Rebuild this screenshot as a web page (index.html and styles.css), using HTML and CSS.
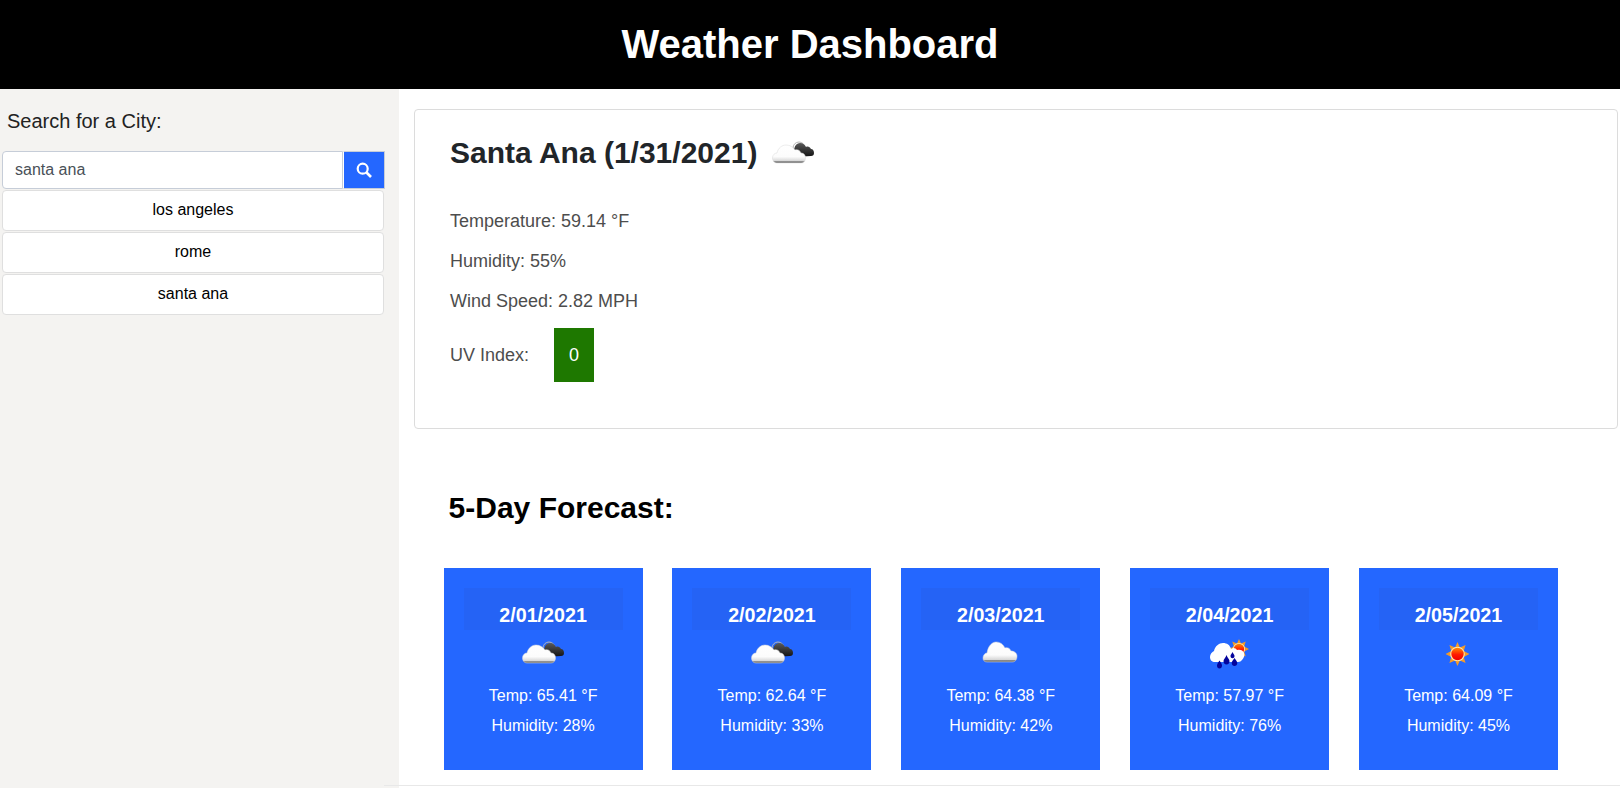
FILE: index.html
```html
<!DOCTYPE html>
<html lang="en">
<head>
  <meta charset="UTF-8">
  <title>Weather Dashboard</title>
  <meta name="viewport" content="width=device-width, initial-scale=1.0">
  <link rel="stylesheet" href="styles.css">
</head>
<body>

  <svg class="defs" width="0" height="0" aria-hidden="true">
    <defs>
      <linearGradient id="white-cloud" x1="0" y1="0" x2="0" y2="1">
        <stop offset="0" stop-color="#ffffff"/>
        <stop offset="0.65" stop-color="#fcfcfc"/>
        <stop offset="0.88" stop-color="#d8d8d8"/>
        <stop offset="0.92" stop-color="#8a8a8a"/>
        <stop offset="1" stop-color="#6f6f6f"/>
      </linearGradient>
      <linearGradient id="dark-cloud" x1="0" y1="0" x2="0" y2="1">
        <stop offset="0" stop-color="#5a5a5a"/>
        <stop offset="1" stop-color="#111111"/>
      </linearGradient>
      <linearGradient id="sun-core" x1="0" y1="0" x2="0" y2="1">
        <stop offset="0" stop-color="#ff8a00"/>
        <stop offset="0.55" stop-color="#ff1a00"/>
        <stop offset="1" stop-color="#f00000"/>
      </linearGradient>
      <symbol id="sun-rays" viewBox="0 0 24 24">
        <path fill="#f39a28" d="M12 0l2.400 5.500 5.700-2.600-1.900 6 5.800 3.100-5.800 3 1.900 6-5.700-2.500L12 24l-2.400-5.500-5.700 2.500 1.900-6L0 12l5.800-3.100-1.900-6 5.700 2.600z"/>
        <circle cx="12" cy="12" r="7.300" fill="#ffe9b0"/>
        <circle cx="12" cy="12" r="6.200" fill="url(#sun-core)"/>
      </symbol>
      <symbol id="icon-clouds" viewBox="0 0 50 50">
        <circle cx="31" cy="18" r="6" fill="none" stroke="#b5b5b5" stroke-width="1"/>
        <path fill="url(#dark-cloud)" d="M26 27c-1-5 0-14 6-14 3 0 5 2 6 4 2-1 4 0 5 2 2 0 3 2 3 4s-1 3-3 3z"/>
        <path fill="url(#white-cloud)" stroke="#d9d9d9" stroke-width="0.500" d="M9 33c-3 0-4.500-2.500-4.500-5 0-3 2-5 4.500-5 1-5 5-8 9-8 4 0 7 2 9 5 2-1 5 0 6 3 3 0 4.500 2 4.500 5 0 3-2 5-4.500 5z"/>
      </symbol>
      <symbol id="icon-cloud" viewBox="0 0 50 50">
        <path fill="url(#white-cloud)" stroke="#d9d9d9" stroke-width="0.500" d="M11 32c-3 0-4-2-4-4 0-3 2-5 4-5 1-7 5-11 9-11 4 0 7 2 9 6 2-1 5 0 6 3 3 0 6 2 6 5 0 4-2 6-5 6z"/>
      </symbol>
      <symbol id="icon-rain" viewBox="0 0 50 50">
        <use href="#sun-rays" x="24" y="9" width="20" height="20"/>
        <path fill="#ffffff" d="M10 32c-3 0-5-2-5-5 0-3 2-5 4-6 1-5 5-8 9-8 4 0 7 2 8 6 2-2 5-1 6 1 3-1 6 0 7 3 1 2 0 5-2 7-1 1-2 2-4 2z"/>
        <g fill="#04049c">
          <path d="M14.500 30.500c1 2 2.500 3 2.500 5s-1 3-2.500 3-2.500-1-2.500-3 1.500-3 2.500-5z"/>
          <path d="M21.500 25c1 3 3 4 3 6s-1 3.500-3 3.500-3-1.500-3-3.500 2-3 3-6z"/>
          <path d="M27.500 22c.8 2 2 2.500 2 4s-1 2.200-2 2.200-2-.7-2-2.200 1.200-2 2-4z"/>
          <path d="M29.500 28c1 2 2.800 3 2.800 5s-1.300 3-2.800 3-2.800-1-2.800-3 1.800-3 2.800-5z"/>
        </g>
      </symbol>
      <symbol id="icon-sun" viewBox="0 0 50 50">
        <use href="#sun-rays" x="12.500" y="12" width="24" height="24"/>
      </symbol>
    </defs>
  </svg>

  <header class="site-header">
    <h1>Weather Dashboard</h1>
  </header>

  <div class="layout">
    <aside class="sidebar">
      <p class="search-label">Search for a City:</p>
      <form class="search-form">
        <input class="search-input" type="text" value="santa ana" aria-label="City">
        <button class="search-btn" type="button" aria-label="Search">
          <svg width="16" height="16" viewBox="0 0 16 16" fill="none" stroke="#fff">
            <circle cx="6.700" cy="6.700" r="5" stroke-width="2.200"/>
            <path d="M10.500 10.500L15 15" stroke-width="2.600"/>
          </svg>
        </button>
      </form>
      <ul class="history">
        <li><button type="button">los angeles</button></li>
        <li><button type="button">rome</button></li>
        <li><button type="button">santa ana</button></li>
      </ul>
    </aside>

    <main class="content">
      <section class="current">
        <h2>Santa Ana (1/31/2021) <svg class="icon-big" width="50" height="50"><use href="#icon-clouds"/></svg></h2>
        <p>Temperature: 59.14 °F</p>
        <p>Humidity: 55%</p>
        <p>Wind Speed: 2.82 MPH</p>
        <div class="uv">
          <span>UV Index:</span>
          <span class="uv-badge">0</span>
        </div>
      </section>

      <section class="forecast">
        <h2>5-Day Forecast:</h2>
        <div class="forecast-row">
          <div class="day">
            <h3>2/01/2021</h3>
            <svg width="50" height="50"><use href="#icon-clouds"/></svg>
            <p>Temp: 65.41 °F</p>
            <p>Humidity: 28%</p>
          </div>
          <div class="day">
            <h3>2/02/2021</h3>
            <svg width="50" height="50"><use href="#icon-clouds"/></svg>
            <p>Temp: 62.64 °F</p>
            <p>Humidity: 33%</p>
          </div>
          <div class="day">
            <h3>2/03/2021</h3>
            <svg width="50" height="50"><use href="#icon-cloud"/></svg>
            <p>Temp: 64.38 °F</p>
            <p>Humidity: 42%</p>
          </div>
          <div class="day">
            <h3>2/04/2021</h3>
            <svg width="50" height="50"><use href="#icon-rain"/></svg>
            <p>Temp: 57.97 °F</p>
            <p>Humidity: 76%</p>
          </div>
          <div class="day">
            <h3>2/05/2021</h3>
            <svg width="50" height="50"><use href="#icon-sun"/></svg>
            <p>Temp: 64.09 °F</p>
            <p>Humidity: 45%</p>
          </div>
        </div>
      </section>
    </main>
  </div>

</body>
</html>
```

FILE: styles.css
```css
* { margin: 0; padding: 0; box-sizing: border-box; }
html, body { height: 788px; overflow: hidden; }
body { font-family: 'Liberation Sans', Arial, sans-serif; background: white; color: #161616; }
.defs { position: absolute; }

.site-header { background: black; color: white; height: 89px; display: flex; align-items: center; justify-content: center; }
.site-header h1 { font-size: 40px; font-weight: 700; }

.layout { display: grid; grid-template-columns: 399px 1fr; height: 699px; }

.sidebar { background: #f4f3f1; padding-top: 20px; }
.search-label { font-size: 20px; line-height: 24px; margin-left: 7px; margin-bottom: 18px; color: #222; }
.search-form { display: flex; margin-left: 2px; width: 383px; height: 38px; }
.search-input { flex: 1; min-width: 0; height: 38px; padding-left: 12px; font: 16px 'Liberation Sans', Arial, sans-serif; color: #495057; background: white; border: 1px solid #c6cdd8; border-radius: 4px 0 0 4px; }
.search-btn { width: 42px; height: 38px; background: #2467ff; border: 1px solid #c6cdd8; border-left: 1px solid #fff; display: flex; align-items: center; justify-content: center; }

.history { list-style: none; margin: 1px 0 0 2px; width: 382px; }
.history button { display: block; width: 100%; height: 41px; margin-bottom: 1px; padding-bottom: 2px; background: white; color: black; font: 16px 'Liberation Sans', Arial, sans-serif; border: 1px solid #dfdfdf; border-radius: 4px; }

.content { padding: 20px 2px 0 15px; position: relative; }
.content::after { content: ''; position: absolute; left: -15px; right: 0; bottom: 2px; height: 1px; background: #e8e8e8; }

.current { height: 320px; border: 1px solid #dcdcdc; border-radius: 4px; padding: 18px 35px 0; }
.current h2 { font-size: 30px; line-height: 50px; color: #212529; display: flex; align-items: center; gap: 2px; white-space: pre; height: 50px; margin-bottom: 31px; }
.icon-big { margin-top: 4px; }
.current p { font-size: 18px; line-height: 24px; margin-bottom: 16px; color: #4d4d4d; }
.uv { display: flex; align-items: center; gap: 25px; font-size: 18px; color: #4d4d4d; margin-top: -1px; }
.uv-badge { width: 40px; height: 54px; background: #1e7800; color: white; display: flex; align-items: center; justify-content: center; }

.forecast { padding-left: 29.600px; }
.forecast h2 { font-size: 30px; line-height: 36px; color: black; margin: 61px 0 42px 5px; }
.forecast-row { display: flex; gap: 29.850px; }
.day { width: 199px; height: 202px; background: #2467ff; color: white; padding-top: 20px; text-align: center; font-size: 16px; }
.day h3 { width: 159px; height: 42px; line-height: 54px; margin: 0 auto; background: #2563f5; font-size: 19.700px; font-weight: 700; }
.day svg { display: block; margin: 0 auto; }
.day p { line-height: 20px; margin-bottom: 10px; position: relative; top: 6px; }
```
